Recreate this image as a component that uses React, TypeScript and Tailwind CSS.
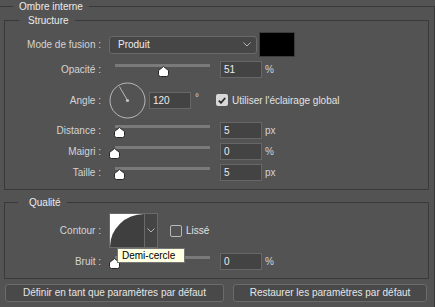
import React from "react";

// slider thumb, centre sits at x inside its track box
const Thumb = ({ x }: { x: number }) => (
  <svg
    width="11"
    height="11"
    viewBox="0 0 11 11"
    className="absolute top-[5px]"
    style={{ left: x - 5.5 }}
  >
    <path
      d="M5.5 0.5 L10.5 4.5 V8.5 Q10.5 10.5 8.5 10.5 H2.5 Q0.5 10.5 0.5 8.5 V4.5 Z"
      fill="#ffffff"
      stroke="#262626"
    />
  </svg>
);

const Slider = ({ pos }: { pos: number }) => (
  <div className="relative w-[111px] h-[17px] shrink-0">
    <div className="absolute left-[6px] top-[3px] w-[95px] h-[3px] bg-[#7a7a7a]" />
    <Thumb x={pos} />
  </div>
);

const NumBox = ({ v }: { v: string }) => (
  <div className="w-[42px] h-[17px] shrink-0 bg-[#434343] border border-[#676767] pl-[3px] leading-[15px] text-[#ececec]">
    {v}
  </div>
);

const Label = ({ children }: { children: React.ReactNode }) => (
  <div className="w-[96px] shrink-0 text-right text-[#d4d4d4] whitespace-nowrap">{children}</div>
);

const Chevron = () => (
  <svg width="8" height="5" viewBox="0 0 8 5">
    <polyline points="0.5,0.5 4,4 7.5,0.5" fill="none" stroke="#b4b4b4" strokeWidth="1" />
  </svg>
);

const SliderRow = ({ label, pos, value, unit, className }: { label: string; pos: number; value: string; unit: string; className: string }) => (
  <div className={`flex items-center h-[17px] ${className}`}>
    <Label>{label}</Label>
    <div className="ml-[8px] flex items-center">
      <Slider pos={pos} />
      <NumBox v={value} />
      <span className="ml-[3px] text-[#d4d4d4]">{unit}</span>
    </div>
  </div>
);

export default function App() {
  return (
    <div className="relative w-[435px] h-[307px] overflow-hidden bg-[#535353] font-['Liberation_Sans',Arial,sans-serif] text-[10px] leading-[13px]">
      <fieldset className="w-[435px] border-t border-r border-[#393939] pb-[12px]">
        <legend className="ml-[13px] px-[6px] h-[13px] leading-[13px] text-[#ebebeb]">Ombre interne</legend>

        {/* Structure */}
        <fieldset className="mt-[1px] ml-[4px] w-[425px] border border-[#393939] pb-[8px]">
          <legend className="ml-[14px] pl-[9px] pr-[6px] h-[13px] leading-[13px] text-[#ebebeb]">Structure</legend>

          <div className="mt-[5px] flex items-center h-[25px]">
            <Label>Mode de fusion :</Label>
            <div className="ml-[8px] w-[148px] h-[18px] flex items-center justify-between bg-[#464646] border border-[#6a6a6a] rounded-[3px] pl-[8px] pr-[5px] text-[#ececec]">
              <span>Produit</span>
              <Chevron />
            </div>
            <div className="ml-[2px] w-[36px] h-[25px] bg-black border border-[#3d3d3d]" />
          </div>

          <SliderRow className="mt-[4px]" label="Opacité :" pos={54} value="51" unit="%" />

          <div className="mt-[4px] flex items-center h-[36px]">
            <Label>Angle :</Label>
            <svg width="37" height="37" viewBox="0 0 37 37" className="ml-[8px] shrink-0">
              <circle cx="18.5" cy="18.5" r="17.5" fill="none" stroke="#b9b9b9" strokeWidth="1" />
              <line x1="18.5" y1="18.5" x2="10.5" y2="4.7" stroke="#b9b9b9" strokeWidth="1" />
              <circle cx="18.5" cy="18.5" r="1.6" fill="#c4c4c4" />
            </svg>
            <div className="ml-[3px]">
              <NumBox v="120" />
            </div>
            <span className="w-[25px] pl-[4px] text-[#d4d4d4] self-start mt-[9px]">°</span>
            <div className="w-[12px] h-[12px] rounded-[2px] bg-[#d8d8d8] flex items-center justify-center">
              <svg width="8" height="7" viewBox="0 0 8 7">
                <polyline points="0.8,3.6 3,5.8 7.2,1" fill="none" stroke="#2a2a2a" strokeWidth="1.8" />
              </svg>
            </div>
            <span className="ml-[4px] text-[#e2e2e2]">Utiliser l'éclairage global</span>
          </div>

          <SliderRow className="mt-[4px]" label="Distance :" pos={10} value="5" unit="px" />
          <SliderRow className="mt-[4px]" label="Maigri :" pos={5} value="0" unit="%" />
          <SliderRow className="mt-[4px]" label="Taille :" pos={10} value="5" unit="px" />
        </fieldset>

        {/* Qualité */}
        <fieldset className="mt-[6px] ml-[4px] w-[425px] border border-[#393939] pb-[8px]">
          <legend className="ml-[13px] pl-[11px] pr-[6px] h-[13px] leading-[13px] text-[#ebebeb]">Qualité</legend>

          <div className="mt-[4px] flex items-center h-[35px]">
            <Label>Contour :</Label>
            <div className="ml-[8px] flex h-[35px] border border-[#6a6a6a]">
              <svg width="34" height="33" viewBox="0 0 34 33" className="bg-white">
                <path d="M0 33 A34 33 0 0 1 34 0 L34 33 Z" fill="#3f3f3f" />
              </svg>
              <div className="w-[13px] bg-[#454545] border-l border-[#6a6a6a] flex items-center justify-center">
                <Chevron />
              </div>
            </div>
            <div className="ml-[12px] w-[12px] h-[12px] rounded-[2px] border border-[#b8b8b8]" />
            <span className="ml-[4px] text-[#e2e2e2]">Lissé</span>
          </div>

          <SliderRow className="mt-[5px]" label="Bruit :" pos={5} value="0" unit="%" />
        </fieldset>

        <div className="mt-[5px] ml-[5px] flex gap-[9px]">
          <button className="w-[219px] h-[18px] bg-[#494949] border border-[#6b6b6b] rounded-[3px] text-[#e6e6e6] leading-[16px]">
            Définir en tant que paramètres par défaut
          </button>
          <button className="w-[194px] h-[18px] bg-[#494949] border border-[#6b6b6b] rounded-[3px] text-[#e6e6e6] leading-[16px]">
            Restaurer les paramètres par défaut
          </button>
        </div>
      </fieldset>

      {/* tooltip over the noise slider */}
      <div className="absolute left-[117px] top-[248px] w-[68px] h-[15px] bg-[#ffffe1] border border-[#767676] pl-[4px] leading-[13px] text-black">
        Demi-cercle
      </div>
    </div>
  );
}
